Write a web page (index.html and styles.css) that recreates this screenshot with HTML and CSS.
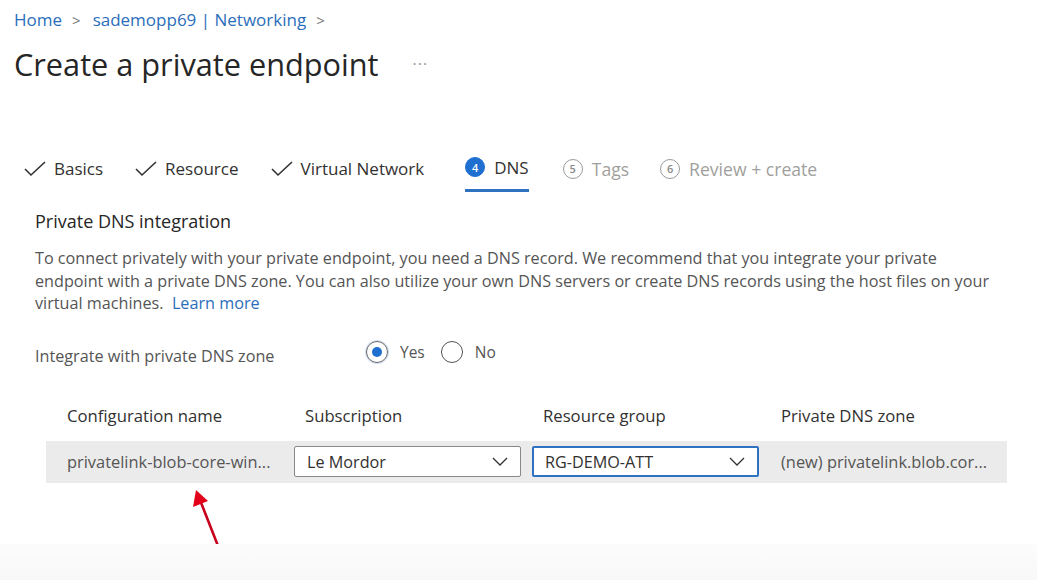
FILE: index.html
```html
<!DOCTYPE html>
<html>
<head>
<meta charset="utf-8">
<link rel="stylesheet" href="styles.css">
</head>
<body>
<div class="page">
  <nav class="crumbs">
    <a>Home</a><span class="sep">&gt;</span><a>sademopp69 | Networking</a><span class="sep">&gt;</span>
  </nav>
  <div class="titlebar">
    <h1>Create a private endpoint</h1>
    <span class="more">···</span>
  </div>

  <div class="tabs">
    <div class="tab done"><svg class="check" viewBox="0 0 22 16" width="22" height="16"><polyline points="1,8 7,14 21,1" fill="none" stroke="#323130" stroke-width="1.6"/></svg><span>Basics</span></div>
    <div class="tab done"><svg class="check" viewBox="0 0 22 16" width="22" height="16"><polyline points="1,8 7,14 21,1" fill="none" stroke="#323130" stroke-width="1.6"/></svg><span>Resource</span></div>
    <div class="tab done"><svg class="check" viewBox="0 0 22 16" width="22" height="16"><polyline points="1,8 7,14 21,1" fill="none" stroke="#323130" stroke-width="1.6"/></svg><span>Virtual Network</span></div>
    <div class="tab active"><span class="num filled">4</span><span>DNS</span></div>
    <div class="tab todo"><span class="num">5</span><span>Tags</span></div>
    <div class="tab todo"><span class="num">6</span><span>Review + create</span></div>
  </div>

  <section class="content">
    <h2>Private DNS integration</h2>
    <p class="desc">To connect privately with your private endpoint, you need a DNS record. We recommend that you integrate your private<br>endpoint with a private DNS zone. You can also utilize your own DNS servers or create DNS records using the host files on your<br>virtual machines.&nbsp; <a class="link">Learn more</a></p>

    <div class="field">
      <span class="label">Integrate with private DNS zone</span>
      <div class="radios">
        <span class="radio checked"></span><span class="rlabel">Yes</span>
        <span class="radio"></span><span class="rlabel">No</span>
      </div>
    </div>
  </section>

  <div class="grid">
    <div class="head first">Configuration name</div>
    <div class="head">Subscription</div>
    <div class="head">Resource group</div>
    <div class="head">Private DNS zone</div>
    <div class="row">
      <div class="cell first">privatelink-blob-core-win...</div>
      <div class="cell"><div class="select"><span>Le Mordor</span><svg viewBox="0 0 16 10" width="16" height="10"><polyline points="1,1 8,8 15,1" fill="none" stroke="#323130" stroke-width="1.3"/></svg></div></div>
      <div class="cell"><div class="select focus"><span>RG-DEMO-ATT</span><svg viewBox="0 0 16 10" width="16" height="10"><polyline points="1,1 8,8 15,1" fill="none" stroke="#323130" stroke-width="1.3"/></svg></div></div>
      <div class="cell last">(new) privatelink.blob.cor...</div>
    </div>
  </div>

  <svg class="arrow" width="40" height="70" viewBox="0 0 40 70">
    <line x1="29" y1="61" x2="9" y2="10" stroke="#c8001e" stroke-width="2.6" stroke-linecap="round"/>
    <polygon points="5,0 2,17 17,11" fill="#e3001b"/>
  </svg>
</div>
<div class="footer"></div>
</body>
</html>
```

FILE: styles.css
```css
* { box-sizing: border-box; }
html, body { margin: 0; padding: 0; background: #fff; }
body {
  font-family: "Open Sans", "Noto Sans", sans-serif;
  color: #323130;
  width: 1037px;
  height: 580px;
  overflow: hidden;
  position: relative;
}
.page { padding: 8px 0 0 14px; position: relative; }
.crumbs {
  font-size: 17px;
  line-height: 24px;
  color: #2a6ebb;
  display: flex;
  align-items: center;
}
.crumbs a { color: #2a6ebb; }
.crumbs .sep { color: #777; margin: 0 12px 0 10px; font-size: 15px; }
.titlebar { display: flex; align-items: center; margin-top: 13px; }
h1 {
  margin: 0;
  font-weight: 400;
  font-size: 30.7px;
  line-height: 38px;
  color: #262626;
  letter-spacing: 0;
}
.more { margin-left: 34px; color: #999; font-size: 16px; letter-spacing: 1px; }

.tabs {
  display: flex;
  align-items: flex-start;
  margin-top: 71px;
  margin-left: 10px;
  height: 40px;
}
.tab {
  display: flex;
  align-items: center;
  font-size: 17px;
  height: 29px;
  color: #323130;
  margin-right: 32px;
}
.tab .check { margin-right: 8px; }
.tab.active { margin-left: 9px; border-bottom: 3px solid #2f72c2; height: 38px; padding-bottom: 9px; margin-right: 34px; }
.num {
  width: 20px; height: 20px;
  border-radius: 50%;
  border: 1px solid #9a9a9a;
  color: #8a8a8a;
  font-size: 11px;
  display: inline-flex; align-items: center; justify-content: center;
  margin-right: 9px;
  font-weight: 600;
}
.num.filled { background: #1f6fd0; border-color: #1f6fd0; color: #fff; }
.tab.todo { color: #a19f9d; font-size: 17.6px; }
.tab.todo:nth-child(5) { margin-right: 31px; }

.content { margin-left: 21px; }
h2 { margin: 0; font-size: 18px; font-weight: 400; line-height: 24px; color: #262626; margin-top: 15px; }
.desc {
  margin: 14px 0 0 0;
  font-size: 16.2px;
  line-height: 22.5px;
  color: #555;
}
.link { color: #2a6ebb; }
.field { display: flex; align-items: center; margin-top: 23px; }
.label { font-size: 16.2px; color: #555; width: 331px; padding-top: 7px; }
.radios { display: flex; align-items: center; }
.radio {
  width: 22px; height: 22px; border-radius: 50%;
  border: 1px solid #555;
  display: inline-block; position: relative;
}
.radio.checked { border-color: #666; box-shadow: 0 0 0 1px #cfe0f3; }
.radio.checked::after {
  content: ""; position: absolute; left: 5px; top: 5px;
  width: 10px; height: 10px; border-radius: 50%; background: #1f6fd0;
}
.rlabel { font-size: 15.5px; color: #555; margin: 0 16px 0 12px; }

.grid {
  margin: 38px 0 0 32px;
  width: 961px;
  display: grid;
  grid-template-columns: 248px 238px 238px 237px;
}
.head { font-size: 16.7px; color: #323130; padding-left: 11px; height: 36px; line-height: 22px; }
.head.first { padding-left: 21px; }
.row {
  grid-column: 1 / -1;
  display: grid;
  grid-template-columns: 248px 238px 238px 237px;
  background: #ebebeb;
  height: 42px;
  align-items: center;
}
.cell { font-size: 16.4px; color: #555; white-space: nowrap; }
.cell.first { padding-left: 21px; }
.cell.last { padding-left: 11px; }
.select {
  width: 227px; height: 31px;
  background: #fff;
  border: 1px solid #8a8886;
  border-radius: 2px;
  display: flex; align-items: center; justify-content: space-between;
  padding: 0 12px 0 12px;
  color: #323130;
  font-size: 16.2px;
}
.select.focus { border: 2px solid #2f72c2; padding-left: 11px; }
.arrow { position: absolute; left: 191px; top: 490px; }
.footer {
  position: absolute; left: 0; right: 0; bottom: 0; height: 36px;
  background: linear-gradient(#fcfcfc, #f8f8f8);
}
```
